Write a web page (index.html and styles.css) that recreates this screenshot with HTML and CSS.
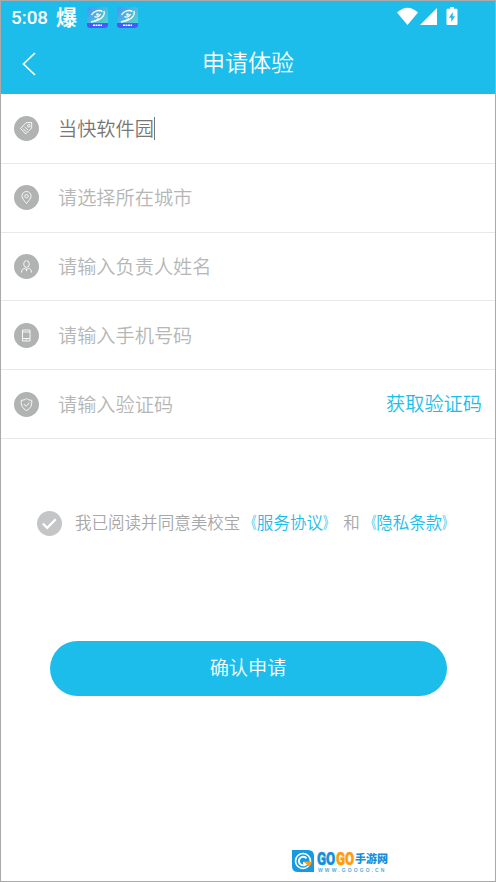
FILE: index.html
```html
<!DOCTYPE html>
<html lang="zh-CN">
<head>
<meta charset="utf-8">
<title>申请体验</title>
<link rel="stylesheet" href="styles.css">
</head>
<body>
<main class="screen">
  <header class="header">
    <div class="status">
      <span class="time">5:08</span>
      <span class="notice">爆</span>
      <svg class="app" viewBox="0 0 21 21"><defs><linearGradient id="app" x1="0" y1="0" x2="1" y2="1"><stop stop-color="#4a94f4"/><stop offset="1" stop-color="#4fe0c8"/></linearGradient><clipPath id="round"><rect width="21" height="21" rx="3"/></clipPath></defs><g clip-path="url(#round)"><path fill="url(#app)" d="M0 0h21v21H0z"/><path fill="#4a58fa" d="M0 16h21v5H0z"/></g><path d="M4.500 8c2-4.500 8-5.500 11-3.500M17 4c1.500 5-4 10-13 11 4-1 6-2 8-3.500M7.500 9.500c2 1.500 5 0 6-2.500" fill="none" stroke="#fff" stroke-width="1.300"/><circle cx="10.500" cy="7.500" r="1.300" fill="#fff"/><path d="M6 18.200h9" stroke="#fff" stroke-width="1.500" stroke-dasharray="2 .5"/></svg>
      <svg class="app" viewBox="0 0 21 21"><g clip-path="url(#round)"><path fill="url(#app)" d="M0 0h21v21H0z"/><path fill="#4a58fa" d="M0 16h21v5H0z"/></g><path d="M4.500 8c2-4.500 8-5.500 11-3.500M17 4c1.500 5-4 10-13 11 4-1 6-2 8-3.500M7.500 9.500c2 1.500 5 0 6-2.500" fill="none" stroke="#fff" stroke-width="1.300"/><circle cx="10.500" cy="7.500" r="1.300" fill="#fff"/><path d="M6 18.200h9" stroke="#fff" stroke-width="1.500" stroke-dasharray="2 .5"/></svg>
      <svg class="signals" viewBox="0 0 62 20"><g fill="#fff"><path d="M0 5.500Q10.500-4 21 5.500L10.500 18z"/><path d="M40 1v17H23z"/><path fill-rule="evenodd" d="M53 0h4v1.700h2.500q1 0 1 1V17q0 1-1 1h-9q-1 0-1-1V2.700q0-1 1-1H53zM55.700 5L52 10.800h2.300V15L58 9.200h-2.300z"/></g></svg>
    </div>
    <div class="nav">
      <svg class="back" viewBox="0 0 14 24"><path d="M13 1L1.500 12 13 23" fill="none" stroke="#fff" stroke-width="1.700"/></svg>
      <h1 class="title">申请体验</h1>
    </div>
  </header>
  <form class="form">
    <div class="row filled">
      <svg class="icon" viewBox="0 0 25 25"><circle cx="12.500" cy="12.500" r="12.500"/><path d="M6.500 12.500l5.500-5.800 5.700-.2v5.500l-6 6zM9 12.500l3.500 3.500M10.700 10.800l3.300 3.300"/><circle class="line" cx="14.800" cy="9.800" r="1.300"/></svg>
      <span class="field">当快软件园</span><span class="caret"></span>
    </div>
    <div class="row">
      <svg class="icon" viewBox="0 0 25 25"><circle cx="12.500" cy="12.500" r="12.500"/><path d="M12.500 18.500C10.500 16 8 13.700 8 11a4.500 4.500 0 0 1 9 0c0 2.700-2.500 5-4.500 7.500z"/><circle class="line" cx="12.500" cy="11.200" r="1.700"/></svg>
      <span class="field">请选择所在城市</span>
    </div>
    <div class="row">
      <svg class="icon" viewBox="0 0 25 25"><circle cx="12.500" cy="12.500" r="12.500"/><path d="M7.500 18.500c0-2.500 1-3.600 3.200-4.300l1.800 1.800 1.800-1.800c2.200.7 3.200 1.800 3.200 4.300M12.500 14.500v2.700"/><ellipse class="line" cx="12.500" cy="10" rx="2.800" ry="3.300"/></svg>
      <span class="field">请输入负责人姓名</span>
    </div>
    <div class="row">
      <svg class="icon" viewBox="0 0 25 25"><circle cx="12.500" cy="12.500" r="12.500"/><path d="M8.500 7h7.500v11H8.500zM8.500 9h7.500M8.500 15.500h7.500M11.500 16.800h1.500"/></svg>
      <span class="field">请输入手机号码</span>
    </div>
    <div class="row">
      <svg class="icon" viewBox="0 0 25 25"><circle cx="12.500" cy="12.500" r="12.500"/><path d="M12.500 6.500c1.500 1.300 3 1.700 5.300 1.800.2 4.700-1 8.200-5.300 10.200-4.300-2-5.500-5.500-5.300-10.200 2.300-.1 3.800-.5 5.300-1.800zM9.800 12l2.200 2.300 3.700-3.800"/></svg>
      <span class="field">请输入验证码</span>
      <a class="code">获取验证码</a>
    </div>
  </form>
  <div class="agree">
    <svg class="check" viewBox="0 0 25 25"><circle cx="12.500" cy="12.500" r="12.500" fill="#c3c5c7"/><path d="M5.800 12.500l4.400 4.300 8.500-8.600" fill="none" stroke="#fff" stroke-width="2.300"/></svg>
    <p class="terms">我已阅读并同意美校宝<a><span class="open">《</span>服务协议<span class="close">》</span></a> 和<a><span class="open">《</span>隐私条款<span class="close">》</span></a></p>
  </div>
  <button class="submit">确认申请</button>
  <footer class="brand">
    <svg class="mark" viewBox="0 0 22 22"><path fill="#179be0" d="M0 0h16q6 0 6 6v16H6q-6 0-6-6z"/><circle cx="11" cy="11" r="7.500" fill="none" stroke="#fff" stroke-width="1.600"/><path d="M14.500 8.300a4.300 4.300 0 1 0 .5 4.700h-4" fill="none" stroke="#fff" stroke-width="2"/><path fill="#ff9c0c" d="M11 11.500h9q-.5 3-3 5.300L14.500 14z"/></svg>
    <div class="words">
      <div class="name"><span class="go">GO</span><span class="go orange">GO</span><span class="cn">手游网</span></div>
      <div class="site">WWW.GOOGO.CN</div>
    </div>
  </footer>
</main>
</body>
</html>
```
FILE: styles.css
```css
* { box-sizing: border-box; }
body { margin: 0; font-family: "Noto Sans CJK SC", sans-serif; font-weight: 350; }
.screen { height: 882px; border: 1px solid #aaa; background: #fff; display: flex; flex-direction: column; overflow: hidden; }
.header { height: 93px; flex: none; background: #1dbdeb; color: #fff; }
.status { height: 32px; padding: 0 36px 0 10px; display: flex; align-items: center; }
.time { width: 45px; font: 500 18.8px/32px Roboto, sans-serif; padding-top: 1px; }
.notice { width: 31px; font-size: 21px; line-height: 30px; font-weight: 700; margin-top: -3px; }
.app { width: 21px; height: 21px; margin-right: 9px; }
.signals { width: 62px; height: 20px; margin-left: auto; }
.nav { height: 61px; display: flex; align-items: center; padding-left: 21px; }
.back { width: 14px; height: 24px; }
.title { margin: -5px 35px 0 0; flex: 1; text-align: center; font-size: 23px; line-height: 34px; font-weight: 350; }
.form { flex: none; padding-top: .8px; }
.row { height: 68.9px; padding: 0 13px; display: flex; align-items: center; border-bottom: 1.5px solid #e8e8e8; color: #b5b7b6; font-size: 19.2px; line-height: 28px; }
.field { margin-top: -.6px; }
.code { margin: -2px 0 0 auto; color: #1dbdeb; }
.filled { color: #777; }
.icon { width: 25px; height: 25px; margin-right: 19px; fill: #b0b3b2; flex: none; }
.icon path, .icon .line { fill: none; stroke: #fff; stroke-width: .9; }
.caret { width: 1px; height: 23px; background: #777; }
.agree { height: 26px; margin: 71px 0 0 36px; display: flex; align-items: center; flex: none; }
.check { width: 25px; height: 25px; margin-right: 13px; }
.terms { margin: -2px 0 0; font-size: 16.55px; line-height: 25px; color: #a7a7a7; white-space: nowrap; }
.terms a { color: #1dbdeb; }
.open, .close { display: inline-block; transform: scaleX(.65); }
.open { transform-origin: right; }
.close { transform-origin: left; }
.submit { width: 397px; height: 55px; flex: none; margin: 105px auto 0 48.5px; padding: 0 0 3px; border: 0; border-radius: 28px; background: #1dbdeb; color: #fff; font: 350 19.2px/28px "Noto Sans CJK SC", sans-serif; }
.brand { display: flex; margin: 154px 0 0 291px; height: 24px; flex: none; }
.mark { width: 22px; height: 22px; margin-right: 3px; }
.words { white-space: nowrap; }
.name { display: flex; height: 17px; align-items: center; color: #168fda; font-weight: 900; }
.go { width: 19px; font: 900 18px/17px Roboto, sans-serif; transform: scaleX(.74); transform-origin: left; -webkit-text-stroke: .5px currentColor; }
.orange { color: #ff9c0c; }
.cn { font-size: 11px; line-height: 17px; }
.site { font: 700 5px/6px "Liberation Sans", sans-serif; letter-spacing: 2.1px; color: #55aee0; padding-left: 1px; }
```
